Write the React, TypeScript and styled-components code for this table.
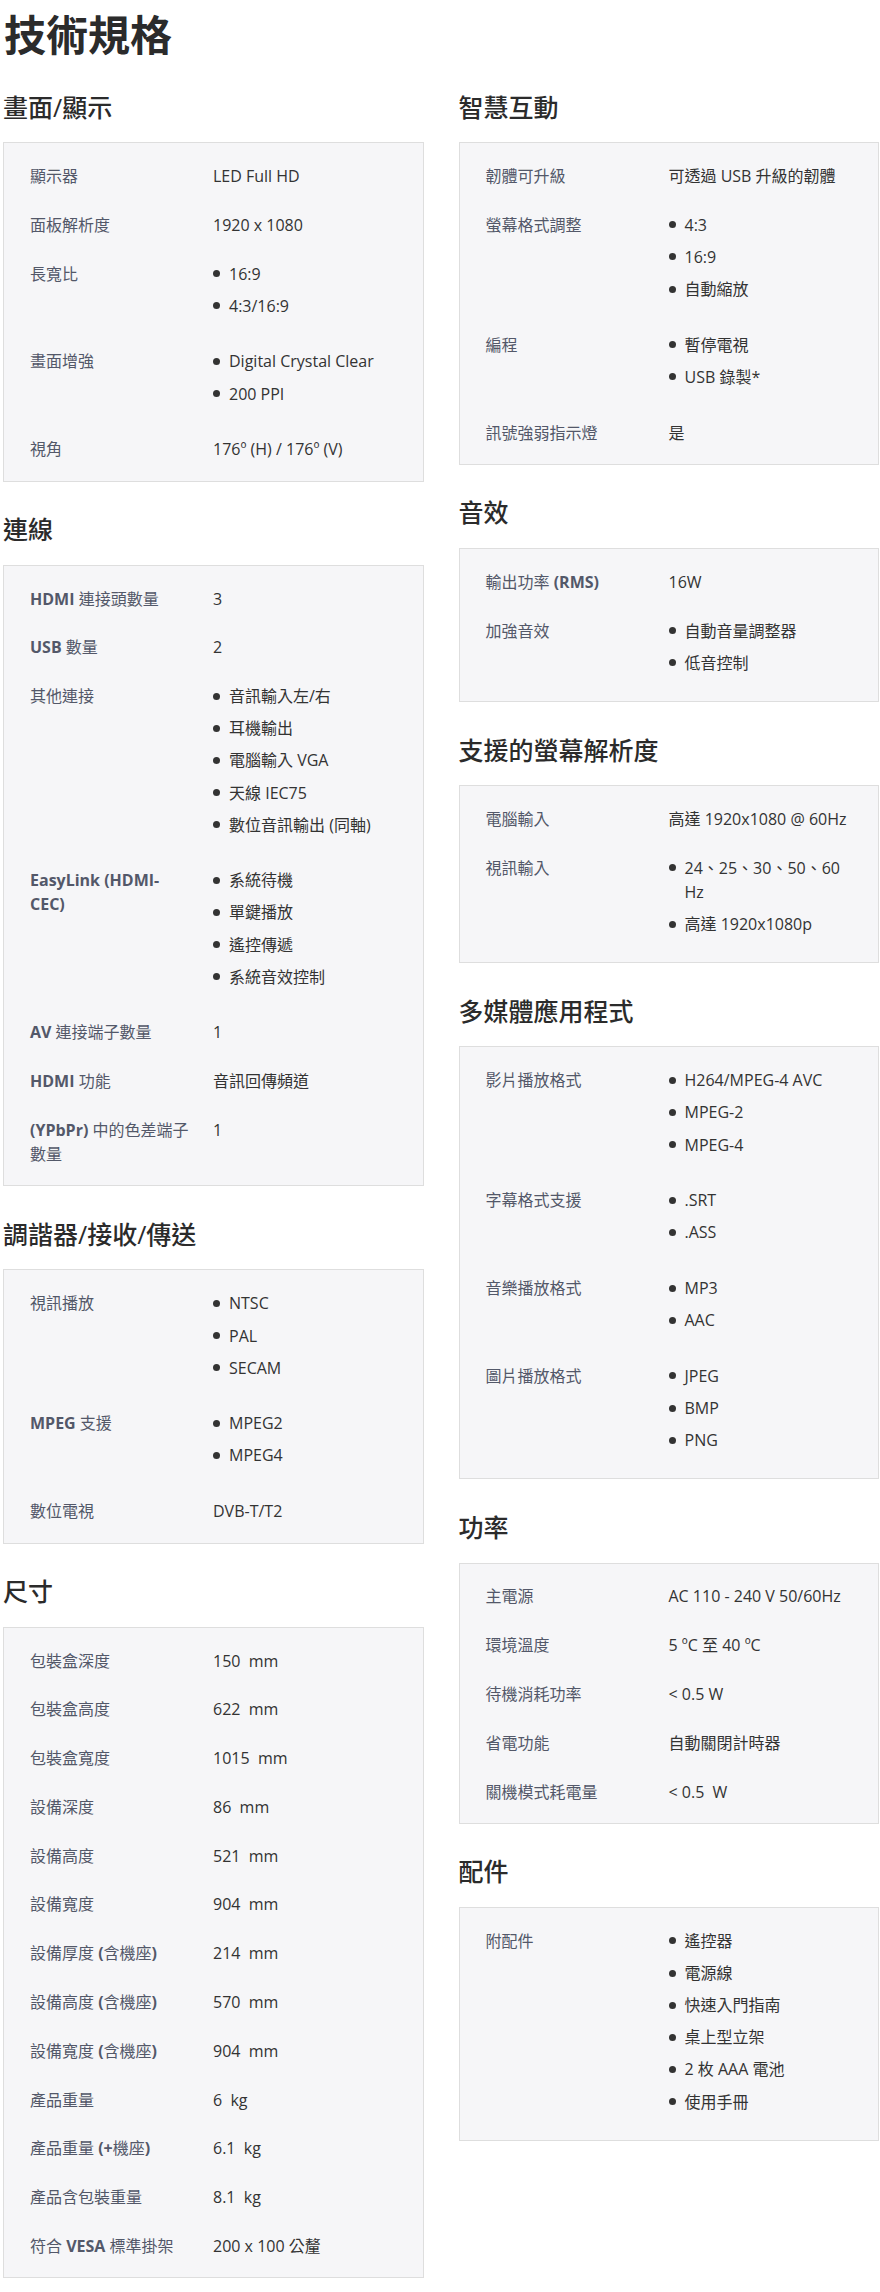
import React from "react";
import styled, { createGlobalStyle } from "styled-components";

const GlobalStyle = createGlobalStyle`
  html, body { margin: 0; padding: 0; background: #ffffff; }
  body {
    font-family: "Open Sans", "Noto Sans CJK TC", sans-serif;
    color: #333333;
  }
  * { box-sizing: border-box; }
`;

const Page = styled.div`
  width: 880px;
  padding: 11px 1px 11px 3px;
`;

const Title = styled.h1`
  margin: 0;
  padding-left: 1px;
  font-size: 42px;
  line-height: 48px;
  font-weight: 700;
  color: #2b2b2b;
`;

const Columns = styled.div`
  display: grid;
  grid-template-columns: 1fr 1fr;
  column-gap: 35px;
  align-items: start;
`;

const Column = styled.div`
  display: flex;
  flex-direction: column;
`;

const SectionTitle = styled.h2`
  margin: 31.5px 0 19.6px;
  font-size: 25px;
  line-height: 32px;
  font-weight: 500;
  color: #2b2b2b;
`;

const SpecBox = styled.dl`
  margin: 0;
  padding: 8.5px 26px 7px;
  background: #f6f6f8;
  border: 1px solid #dedede;
`;

const Row = styled.div`
  display: grid;
  grid-template-columns: 160px 1fr;
  column-gap: 23px;
  padding: 12.4px 0;
`;

const Label = styled.dt`
  margin: 0;
  font-size: 16px;
  line-height: 24px;
  color: #535869;
`;

const Bold = styled.b`
  font-weight: 700;
`;

const Value = styled.dd`
  margin: 0;
  font-size: 16px;
  line-height: 24px;
  color: #333333;
`;

const List = styled.ul`
  list-style: none;
  margin: 0;
  padding: 0 0 6.9px;
`;

const Item = styled.li`
  display: flex;
  align-items: flex-start;
  gap: 9px;
  & + & {
    margin-top: 8.15px;
  }
`;

const Dot = styled.span`
  flex: none;
  width: 7px;
  height: 7px;
  margin-top: 8.5px;
  border-radius: 50%;
  background: #333333;
`;

type Spec = { label: string; value: string | string[] };
type Section = { title: string; rows: Spec[] };

const sp = "\u00a0 ";

const leftSections: Section[] = [
  {
    title: "畫面/顯示",
    rows: [
      { label: "顯示器", value: "LED Full HD" },
      { label: "面板解析度", value: "1920 x 1080" },
      { label: "長寬比", value: ["16:9", "4:3/16:9"] },
      { label: "畫面增強", value: ["Digital Crystal Clear", "200 PPI"] },
      { label: "視角", value: "176º (H) / 176º (V)" },
    ],
  },
  {
    title: "連線",
    rows: [
      { label: "HDMI 連接頭數量", value: "3" },
      { label: "USB 數量", value: "2" },
      {
        label: "其他連接",
        value: ["音訊輸入左/右", "耳機輸出", "電腦輸入 VGA", "天線 IEC75", "數位音訊輸出 (同軸)"],
      },
      { label: "EasyLink (HDMI-CEC)", value: ["系統待機", "單鍵播放", "遙控傳遞", "系統音效控制"] },
      { label: "AV 連接端子數量", value: "1" },
      { label: "HDMI 功能", value: "音訊回傳頻道" },
      { label: "(YPbPr) 中的色差端子數量", value: "1" },
    ],
  },
  {
    title: "調諧器/接收/傳送",
    rows: [
      { label: "視訊播放", value: ["NTSC", "PAL", "SECAM"] },
      { label: "MPEG 支援", value: ["MPEG2", "MPEG4"] },
      { label: "數位電視", value: "DVB-T/T2" },
    ],
  },
  {
    title: "尺寸",
    rows: [
      { label: "包裝盒深度", value: `150${sp}mm` },
      { label: "包裝盒高度", value: `622${sp}mm` },
      { label: "包裝盒寬度", value: `1015${sp}mm` },
      { label: "設備深度", value: `86${sp}mm` },
      { label: "設備高度", value: `521${sp}mm` },
      { label: "設備寬度", value: `904${sp}mm` },
      { label: "設備厚度 (含機座)", value: `214${sp}mm` },
      { label: "設備高度 (含機座)", value: `570${sp}mm` },
      { label: "設備寬度 (含機座)", value: `904${sp}mm` },
      { label: "產品重量", value: `6${sp}kg` },
      { label: "產品重量 (+機座)", value: `6.1${sp}kg` },
      { label: "產品含包裝重量", value: `8.1${sp}kg` },
      { label: "符合 VESA 標準掛架", value: "200 x 100 公釐" },
    ],
  },
];

const rightSections: Section[] = [
  {
    title: "智慧互動",
    rows: [
      { label: "韌體可升級", value: "可透過 USB 升級的韌體" },
      { label: "螢幕格式調整", value: ["4:3", "16:9", "自動縮放"] },
      { label: "編程", value: ["暫停電視", "USB 錄製*"] },
      { label: "訊號強弱指示燈", value: "是" },
    ],
  },
  {
    title: "音效",
    rows: [
      { label: "輸出功率 (RMS)", value: "16W" },
      { label: "加強音效", value: ["自動音量調整器", "低音控制"] },
    ],
  },
  {
    title: "支援的螢幕解析度",
    rows: [
      { label: "電腦輸入", value: "高達 1920x1080 @ 60Hz" },
      { label: "視訊輸入", value: ["24、25、30、50、60 Hz", "高達 1920x1080p"] },
    ],
  },
  {
    title: "多媒體應用程式",
    rows: [
      { label: "影片播放格式", value: ["H264/MPEG-4 AVC", "MPEG-2", "MPEG-4"] },
      { label: "字幕格式支援", value: [".SRT", ".ASS"] },
      { label: "音樂播放格式", value: ["MP3", "AAC"] },
      { label: "圖片播放格式", value: ["JPEG", "BMP", "PNG"] },
    ],
  },
  {
    title: "功率",
    rows: [
      { label: "主電源", value: "AC 110 - 240 V 50/60Hz" },
      { label: "環境溫度", value: "5 ºC 至 40 ºC" },
      { label: "待機消耗功率", value: "< 0.5 W" },
      { label: "省電功能", value: "自動關閉計時器" },
      { label: "關機模式耗電量", value: `< 0.5${sp}W` },
    ],
  },
  {
    title: "配件",
    rows: [
      {
        label: "附配件",
        value: ["遙控器", "電源線", "快速入門指南", "桌上型立架", "2 枚 AAA 電池", "使用手冊"],
      },
    ],
  },
];

const renderLabel = (text: string) =>
  text
    .split(/([\x21-\x7E](?:[\x20-\x7E]*[\x21-\x7E])?)/)
    .filter((p) => p !== "")
    .map((part, i) =>
      /[\x21-\x7E]/.test(part) ? <Bold key={i}>{part}</Bold> : <React.Fragment key={i}>{part}</React.Fragment>
    );

const SpecRow = ({ spec }: { spec: Spec }) => (
  <Row>
    <Label>{renderLabel(spec.label)}</Label>
    <Value>
      {Array.isArray(spec.value) ? (
        <List>
          {spec.value.map((v) => (
            <Item key={v}>
              <Dot />
              <span>{v}</span>
            </Item>
          ))}
        </List>
      ) : (
        spec.value
      )}
    </Value>
  </Row>
);

const SpecSection = ({ section }: { section: Section }) => (
  <section>
    <SectionTitle>{section.title}</SectionTitle>
    <SpecBox>
      {section.rows.map((r) => (
        <SpecRow key={r.label} spec={r} />
      ))}
    </SpecBox>
  </section>
);

export default function App() {
  return (
    <>
      <GlobalStyle />
      <Page>
        <Title>技術規格</Title>
        <Columns>
          <Column>
            {leftSections.map((s) => (
              <SpecSection key={s.title} section={s} />
            ))}
          </Column>
          <Column>
            {rightSections.map((s) => (
              <SpecSection key={s.title} section={s} />
            ))}
          </Column>
        </Columns>
      </Page>
    </>
  );
}
